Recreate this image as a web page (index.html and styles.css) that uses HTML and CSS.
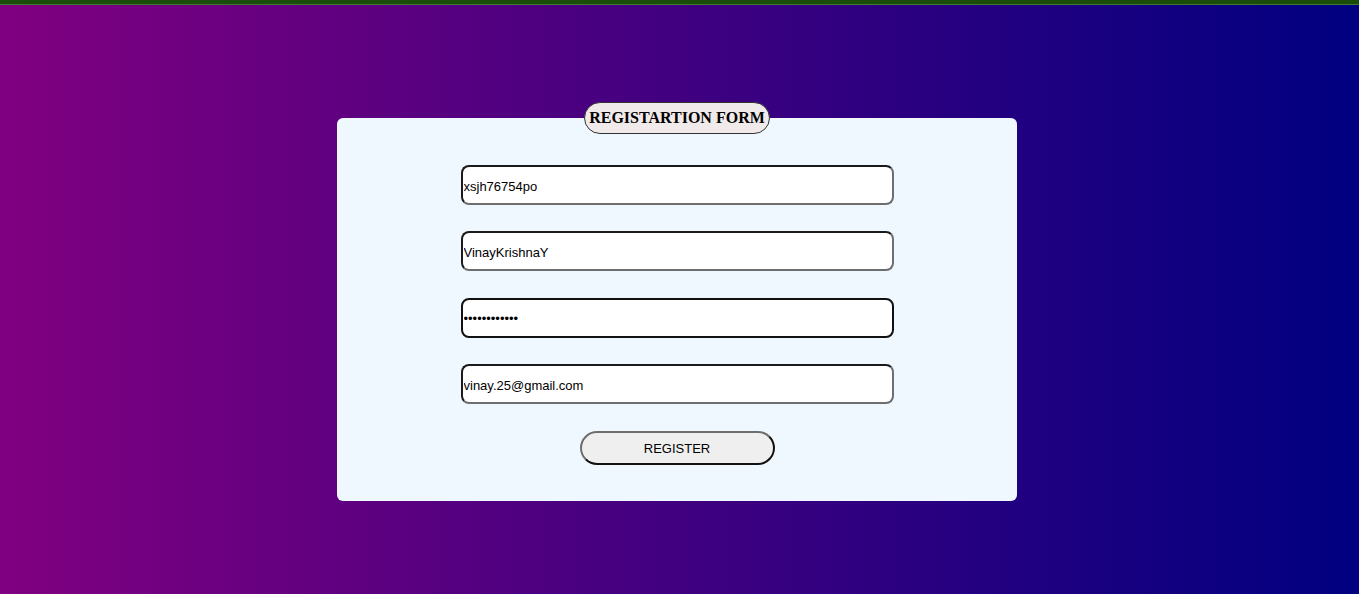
FILE: index.html
```html
<!DOCTYPE html>
<html lang="en">
<head>
<meta charset="utf-8">
<title>Registration</title>
<link rel="stylesheet" href="styles.css">
</head>
<body>
<div class="topbar"></div>
<main class="page">
  <fieldset class="card">
    <legend class="card-title">REGISTARTION FORM</legend>
    <form class="form">
      <input class="field" type="text" value="xsjh76754po">
      <input class="field" type="text" value="VinayKrishnaY">
      <input class="field field-active" type="password" value="vinay@123456">
      <input class="field" type="email" value="vinay.25@gmail.com">
      <button class="btn" type="button">REGISTER</button>
    </form>
  </fieldset>
</main>
</body>
</html>
```
FILE: styles.css
```css
html, body {
  margin: 0;
  padding: 0;
}
body {
  min-height: 594px;
  background: linear-gradient(to right, #800080, #000080);
  font-family: "Liberation Sans", Arial, sans-serif;
}
.topbar {
  height: 4px;
  background: #1a4d0a;
  border-bottom: 1px solid #3f7a33;
}
.page {
  padding: 97px 5px 0 0;
}
.card {
  width: 680px;
  box-sizing: border-box;
  margin: 0 auto;
  border: none;
  border-radius: 6px;
  background: #f0f8ff;
  padding: 31px 0 36px;
}
.card-title {
  margin: 0 auto;
  padding: 6px 4px 6px;
  border: 1px solid #333;
  border-radius: 16px;
  background: #f1eaea;
  font-family: "Liberation Serif", "Times New Roman", serif;
  font-weight: bold;
  font-size: 16px;
  line-height: 18px;
  color: #000;
}
.form {
  display: flex;
  flex-direction: column;
  align-items: center;
  gap: 26px;
}
.field {
  width: 433px;
  height: 40px;
  box-sizing: border-box;
  margin: 0;
  padding: 3px 1px 1px;
  border: 2px solid;
  border-color: #1a1a1a #6e6e6e #6e6e6e #1a1a1a;
  border-radius: 8px;
  background: #fff;
  font-family: "Liberation Sans", Arial, sans-serif;
  font-size: 13px;
  color: #000;
  outline: none;
}
.field + .field {
  margin-top: 0.4px;
}
.field-active {
  border-color: #111;
}
.btn {
  width: 195px;
  height: 34px;
  box-sizing: border-box;
  margin: 1px 0 0;
  border: 2px solid;
  border-color: #6e6e6e #111 #111 #6e6e6e;
  border-radius: 17px;
  background: #efefef;
  font-family: "Liberation Sans", Arial, sans-serif;
  font-size: 13px;
  color: #000;
}
```
